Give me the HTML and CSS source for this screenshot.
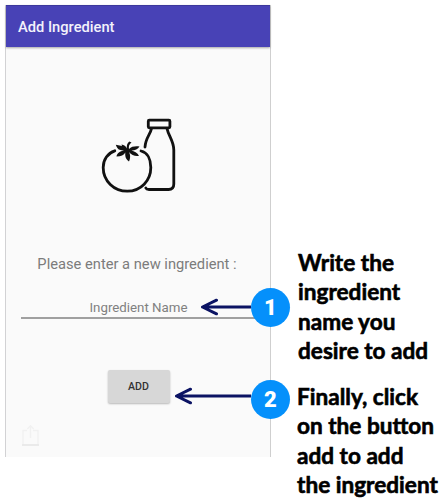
FILE: index.html
```
<!DOCTYPE html>
<html lang="en">
<head>
<meta charset="utf-8">
<title>Add Ingredient</title>
<link rel="stylesheet" href="styles.css">
</head>
<body>
<main class="guide">
  <section class="phone">
    <header class="app-bar">Add Ingredient</header>
    <div class="content">
      <svg class="food" width="80" height="80" viewBox="0 0 80 80" fill="none" stroke="#111" stroke-width="2.8" stroke-linecap="round" stroke-linejoin="round">
        <rect x="48.3" y="5.2" width="21.6" height="7.6" rx="1"/>
        <path d="M51.5 13.5C50.5 19 45.5 23 45 32M67 13.5C68.5 21 73.8 26 73.8 35V69Q73.8 74.5 68.5 74.5H49Q46.5 74.5 45.8 73"/>
        <path d="M14.8 35.8C7.8 38 3.2 44.5 3.2 52.5C3.2 66 14 76.2 27.3 76.2C41 76.2 50.8 65.5 50.8 52.5C50.8 44.5 47.7 37.5 41 36"/>
        <path class="leaf" d="M25 34C23 30 19 31 15.8 29.8C18 36 21 35.3 24 35.3C20 36.3 17 38 16.5 41.5C21 41.5 24 40 25.3 37.5C25 41 25.5 44 29 46.5C31 42 30 39 29 37C31.5 40 35 41.5 39 40.8C37.5 37.5 34 36.2 31.5 35.5C35 35.5 38 34 39.5 31.5C35 31 31.5 31.5 29 34C28.5 31.5 29 29.5 31.5 27.5L29.3 26.5C27 28.5 26.4 31 27 33.5C26 31 24 30 21.5 29.5C22 32 23 33.5 25 34Z"/>
      </svg>
      <p class="prompt">Please enter a new ingredient :</p>
      <div class="field">Ingredient Name</div>
      <button class="add">ADD</button>
      <svg class="share" width="20" height="24" viewBox="0 0 20 24" fill="none" stroke="#f1f1f1" stroke-width="1.4">
        <path d="M6 7.5H2V22H17V7.5H12M9.5 15V3M6.3 6L9.5 2.8L12.7 6"/>
        <path d="M1 22H18" stroke="#e6e6e6"/>
      </svg>
    </div>
  </section>
  <aside class="notes">
    <p class="note"><span>Write the</span><span>ingredient</span><span>name you</span><span>desire to add</span></p>
    <p class="note second"><span>Finally, click</span><span>on the button</span><span>add to add</span><span>the ingredient</span></p>
  </aside>
  <div class="callout one">
    <svg width="51" height="18" viewBox="0 0 51 18"><path d="M51 9H3M16.5 2.2L2.5 9L16.5 15.8"/></svg>
    <b>1</b>
  </div>
  <div class="callout two">
    <svg width="77" height="18" viewBox="0 0 77 18"><path d="M77 9H3M16.5 2.2L2.5 9L16.5 15.8"/></svg>
    <b>2</b>
  </div>
</main>
</body>
</html>
```
FILE: styles.css
```
* { box-sizing: border-box; }
body { margin: 0; background: #fff; }
p { margin: 0; }
.guide {
  position: relative;
  display: flex;
  width: 446px;
  height: 501px;
  padding-top: 5px;
  padding-left: 5px;
  overflow: hidden;
  font-family: Roboto, "Liberation Sans", sans-serif;
}
.phone {
  width: 266px;
  height: 452px;
  border-left: 1px solid #d2d2d4;
  border-right: 1px solid #cfcfcf;
  background: #fafafa;
}
.app-bar {
  height: 42px;
  padding-left: 12px;
  border-top: 1px solid #3c389c;
  background: #4842b6;
  color: #f3f2fb;
  font-size: 14.7px;
  font-weight: 500;
  line-height: 42px;
  box-shadow: 0 1px 2px #0005;
}
.content { display: flex; flex-direction: column; align-items: center; }
.food { margin: 68px 0 0 3px; }
.leaf { fill: #111; stroke: none; }
.prompt {
  margin-top: 59px;
  margin-left: -2px;
  color: #7c7c7c;
  font-size: 14.7px;
  line-height: 20px;
  white-space: nowrap;
}
.field {
  align-self: stretch;
  height: 28px;
  margin: 17px 0 0 15px;
  padding-right: 14px;
  border-bottom: 2px solid #a0a0a0;
  color: #808080;
  font-size: 13.3px;
  line-height: 34px;
  text-align: center;
}
.add {
  width: 62px;
  height: 33px;
  margin-top: 51px;
  margin-left: 1px;
  padding: 0;
  border: 0;
  border-radius: 2px;
  background: #d7d7d7;
  box-shadow: 0 1px 2px #0004;
  color: #333;
  font: 500 10.6px/33px Roboto, sans-serif;
}
.share { align-self: flex-start; margin: 20px 0 0 15px; }
.notes {
  padding: 243px 0 0 27px;
  color: #000;
  font: 700 22.6px/29.3px Lato, sans-serif;
  -webkit-text-stroke: 0.6px #000;
}
.note span { display: block; width: max-content; white-space: nowrap; }
.second { margin: 17px 0 0 -1px; }
.callout {
  position: absolute;
  display: flex;
  align-items: center;
  height: 39px;
}
.one { left: 200px; top: 288px; }
.two { left: 174px; top: 380px; }
.callout svg { fill: none; stroke: #0b1363; stroke-width: 3; stroke-linecap: round; stroke-linejoin: round; }
.one svg { margin-bottom: 1px; }
.two svg { margin-bottom: 7px; }
.callout b {
  width: 39px;
  height: 39px;
  border-radius: 50%;
  background: #0590fb;
  color: #fff;
  font-size: 22px;
  font-weight: 900;
  line-height: 40px;
  text-align: center;
}
```
